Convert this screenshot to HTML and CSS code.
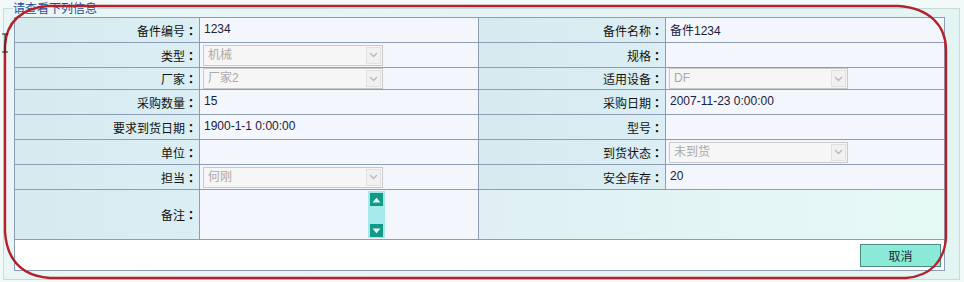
FILE: index.html
```html
<!DOCTYPE html>
<html lang="zh-CN">
<head>
<meta charset="utf-8">
<title>备件信息</title>
<link rel="stylesheet" href="styles.css">
</head>
<body>
<fieldset class="panel">
  <legend class="panel-title">请查看下列信息</legend>
  <div class="form-grid">
    <div class="lbl">备件编号<span class="colon">：</span></div>
    <div class="val">1234</div>
    <div class="lbl">备件名称<span class="colon">：</span></div>
    <div class="val">备件1234</div>

    <div class="lbl">类型<span class="colon">：</span></div>
    <div class="val"><div class="combo"><span class="combo-text">机械</span><span class="combo-btn"><svg width="9" height="6" viewBox="0 0 9 6"><path d="M1 1 L4.5 4.5 L8 1" fill="none" stroke="#b9b9b9" stroke-width="1.4"/></svg></span></div></div>
    <div class="lbl">规格<span class="colon">：</span></div>
    <div class="val"></div>

    <div class="lbl">厂家<span class="colon">：</span></div>
    <div class="val"><div class="combo"><span class="combo-text">厂家2</span><span class="combo-btn"><svg width="9" height="6" viewBox="0 0 9 6"><path d="M1 1 L4.5 4.5 L8 1" fill="none" stroke="#b9b9b9" stroke-width="1.4"/></svg></span></div></div>
    <div class="lbl">适用设备<span class="colon">：</span></div>
    <div class="val"><div class="combo combo-r"><span class="combo-text">DF</span><span class="combo-btn"><svg width="9" height="6" viewBox="0 0 9 6"><path d="M1 1 L4.5 4.5 L8 1" fill="none" stroke="#b9b9b9" stroke-width="1.4"/></svg></span></div></div>

    <div class="lbl">采购数量<span class="colon">：</span></div>
    <div class="val">15</div>
    <div class="lbl">采购日期<span class="colon">：</span></div>
    <div class="val">2007-11-23 0:00:00</div>

    <div class="lbl">要求到货日期<span class="colon">：</span></div>
    <div class="val">1900-1-1 0:00:00</div>
    <div class="lbl">型号<span class="colon">：</span></div>
    <div class="val"></div>

    <div class="lbl">单位<span class="colon">：</span></div>
    <div class="val"></div>
    <div class="lbl">到货状态<span class="colon">：</span></div>
    <div class="val"><div class="combo combo-r"><span class="combo-text">未到货</span><span class="combo-btn"><svg width="9" height="6" viewBox="0 0 9 6"><path d="M1 1 L4.5 4.5 L8 1" fill="none" stroke="#b9b9b9" stroke-width="1.4"/></svg></span></div></div>

    <div class="lbl">担当<span class="colon">：</span></div>
    <div class="val"><div class="combo"><span class="combo-text">何刚</span><span class="combo-btn"><svg width="9" height="6" viewBox="0 0 9 6"><path d="M1 1 L4.5 4.5 L8 1" fill="none" stroke="#b9b9b9" stroke-width="1.4"/></svg></span></div></div>
    <div class="lbl">安全库存<span class="colon">：</span></div>
    <div class="val">20</div>

    <div class="lbl">备注<span class="colon">：</span></div>
    <div class="val memo-cell">
      <div class="memo">
        <div class="memo-text"></div>
        <div class="memo-bar">
          <span class="memo-arrow"><svg width="9" height="6" viewBox="0 0 9 6"><path d="M0.5 5.5 L4.5 0.8 L8.5 5.5 Z" fill="#e6fffb"/></svg></span>
          <span class="memo-arrow"><svg width="9" height="6" viewBox="0 0 9 6"><path d="M0.5 0.5 L4.5 5.2 L8.5 0.5 Z" fill="#e6fffb"/></svg></span>
        </div>
      </div>
    </div>
    <div class="blank"></div>

    <div class="actions">
      <button class="btn" type="button">取消</button>
    </div>
  </div>
</fieldset>

<svg class="annotation" width="964" height="282" viewBox="0 0 964 282" aria-hidden="true">
  <path d="M48 6 L898 6 C930 8 946 26 946 50 L946 238 C944 262 930 276 906 278 L50 278 C22 276 7 260 5 232 L5 46 C6 22 22 8 48 6 Z" fill="none" stroke="#b3222a" stroke-width="2.4"/>
  <path d="M2 34 L8 34 M5 34 L5 52 M2 52 L8 52" fill="none" stroke="#222" stroke-width="1"/>
</svg>
</body>
</html>
```

FILE: styles.css
```css
html, body {
  margin: 0;
  padding: 0;
}

body {
  width: 964px;
  height: 282px;
  overflow: hidden;
  background: #f2f9f9;
  font-family: "Liberation Sans", "Noto Sans CJK SC", sans-serif;
  font-size: 12px;
  color: #111;
  position: relative;
}

.panel {
  margin: 0 4px 0 3px;
  padding: 1px 14px 8px 10px;
  border: 1px solid #c6dcdc;
  background: linear-gradient(90deg, #eaf5f6 0%, #e6f3f4 60%, #e3f5f3 100%);
  min-width: 0;
}

.panel-title {
  padding: 0;
  margin-left: -1px;
  height: 16px;
  line-height: 16px;
  color: #1f4e9e;
  font-family: "Noto Sans CJK SC", sans-serif;
  font-size: 12px;
}

.form-grid {
  display: grid;
  grid-template-columns: 184px 278px 186px 278px;
  grid-template-rows: 24px 24px 21px 24px 24px 24px 24px 49px 30px;
  gap: 1px;
  padding: 1px;
  background: #8e9db6;
  width: 929px;
}

.lbl {
  background: linear-gradient(90deg, #d6eaf0, #dbeef3);
  display: flex;
  align-items: center;
  justify-content: flex-end;
  padding-right: 2px;
  font-family: "Noto Sans CJK SC", sans-serif;
  color: #111;
  white-space: nowrap;
}

.colon {
  font-family: "Noto Sans CJK TC", "Noto Sans CJK SC", sans-serif;
  font-weight: 700;
}

.val {
  background: #f3f6fc;
  display: flex;
  align-items: center;
  padding-left: 4px;
  padding-bottom: 2px;
  color: #1a2140;
  white-space: nowrap;
}

.combo {
  display: flex;
  width: 180px;
  height: 21px;
  margin-left: -1px;
  margin-bottom: -2px;
  box-sizing: border-box;
  border: 1px solid #c9c9c9;
  background: #f6f6f6;
}

.combo-r {
  width: 179px;
}

.combo-text {
  flex: 1;
  padding-left: 4px;
  line-height: 19px;
  color: #a9a9a9;
  font-family: "Liberation Sans", "Noto Sans CJK SC", sans-serif;
}

.combo-btn {
  width: 15px;
  margin: 1px;
  box-sizing: border-box;
  border: 1px solid #e1e1e1;
  background: #f1f1f1;
  display: flex;
  align-items: center;
  justify-content: center;
}

.memo-cell {
  align-items: stretch;
  padding: 1px 0 1px 3px;
}

.memo {
  display: flex;
  width: 182px;
}

.memo-text {
  flex: 1;
}

.memo-bar {
  width: 17px;
  background: #a5e9ea;
  display: flex;
  flex-direction: column;
  justify-content: space-between;
  align-items: center;
  padding: 2px 0 1px;
}

.memo-arrow {
  width: 13px;
  height: 13px;
  background: #13998a;
  display: flex;
  align-items: center;
  justify-content: center;
}

.blank {
  grid-column: span 2;
  background: linear-gradient(90deg, #dfeff4, #e4f6f5 60%, #e6faf5);
}

.actions {
  grid-column: 1 / -1;
  background: #ffffff;
  display: flex;
  align-items: center;
  justify-content: flex-end;
  padding-right: 3px;
}

.btn {
  width: 81px;
  height: 23px;
  margin: 0;
  padding: 0;
  border: 1px solid #4c8c82;
  background: #8ae9d7;
  color: #1b2a2a;
  font-family: "Noto Sans CJK SC", sans-serif;
  font-size: 12px;
  line-height: 21px;
}

.annotation {
  position: absolute;
  left: 0;
  top: 0;
  pointer-events: none;
}
```
